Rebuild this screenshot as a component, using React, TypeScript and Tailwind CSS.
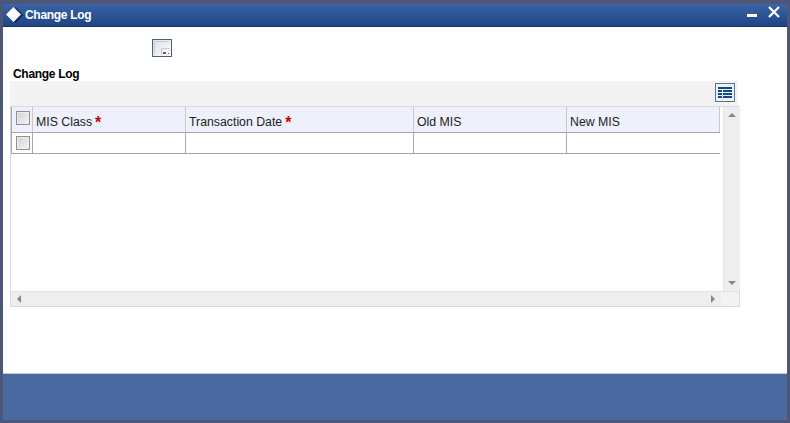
const Check = () => (
  <span className="block w-[14px] h-[14px] border border-[#8f8f8f] bg-gradient-to-br from-[#d0d0d0] to-[#f6f6f6] shadow-[inset_0_0_0_1px_#eeeeee]" />
);

const Req = () => <span className="text-[#cc0000] font-bold text-[16px] leading-[16px] ml-[3px]">*</span>;

const columns = [
  { label: "MIS Class", req: true, w: "w-[153px]" },
  { label: "Transaction Date", req: true, w: "w-[228px]" },
  { label: "Old MIS", req: false, w: "w-[153px]" },
  { label: "New MIS", req: false, w: "w-[153px]" },
];

export default function App() {
  return (
    <div className="w-[790px] h-[423px] bg-[#4d5676] pl-[3px] pr-[3px] pt-[4px] pb-[3px] flex flex-col font-['Liberation_Sans',Arial,sans-serif] overflow-hidden">
      <div className="h-[23px] shrink-0 flex items-center justify-between bg-gradient-to-b from-[#3a64a6] to-[#1f4586] border-b border-[#16305f]">
        <div className="flex items-center">
          <svg width="20" height="18" viewBox="0 0 20 18" className="ml-[2px]">
            <path d="M9 1.5 L17 9.5 L9 17.5 L1 9.5 Z" fill="#0d2a5c" transform="translate(1.5 -0.5)" />
            <path d="M8.5 1 L16 8.5 L8.5 16 L1 8.5 Z" fill="#ffffff" />
          </svg>
          <span className="text-white text-[12px] tracking-[-0.3px] font-bold">Change Log</span>
        </div>
        <div className="flex items-start h-full">
          <span className="block w-[10px] h-[3px] bg-white mt-[10px] mr-[11px]" />
          <svg width="12" height="12" viewBox="0 0 12 12" className="mt-[2px] mr-[7px]">
            <path d="M1 1 L11 11 M11 1 L1 11" stroke="#ffffff" strokeWidth="2.2" />
          </svg>
        </div>
      </div>

      <div className="flex-1 bg-white pl-[7px] flex flex-col">
        <div className="h-[16px] mt-[12px] ml-[142px]">
          <svg width="20" height="18" viewBox="0 0 20 18" className="block">
            <defs>
              <linearGradient id="g" x1="0" y1="0" x2="1" y2="1">
                <stop offset="0" stopColor="#dfe3e8" />
                <stop offset="1" stopColor="#fafbfc" />
              </linearGradient>
            </defs>
            <rect x="0.5" y="0.5" width="19" height="17" fill="url(#g)" stroke="#4f5f76" />
            <path d="M2.5 15.5 V2.5 H17.5" fill="none" stroke="#c3cbd3" />
            <path d="M9.5 15.5 V9.5 H17.5" fill="none" stroke="#c3cbd3" />
            <rect x="11" y="13" width="3" height="2" fill="#a5443c" />
            <rect x="16" y="14" width="1" height="1" fill="#a5443c" />
          </svg>
        </div>
        <div className="mt-[12px] ml-[3px] h-[14px] leading-[14px] text-[12px] tracking-[-0.3px] font-bold text-black">Change Log</div>
        <div className="w-[728px] h-[25px] bg-[#f3f3f3] flex items-start justify-end pr-[3px] pt-[2px]">
          <svg width="20" height="19" viewBox="0 0 20 19" className="block">
            <rect x="0.5" y="0.5" width="19" height="18" fill="#eef1f5" stroke="#5f7390" />
            <rect x="3" y="4" width="14" height="2" fill="#0f4a86" />
            <rect x="3" y="7" width="4" height="2" fill="#0f4a86" />
            <rect x="8" y="7" width="9" height="2" fill="#0f4a86" />
            <rect x="3" y="10" width="4" height="2" fill="#0f4a86" />
            <rect x="8" y="10" width="9" height="2" fill="#0f4a86" />
            <rect x="3" y="13" width="4" height="2" fill="#0f4a86" />
            <rect x="8" y="13" width="9" height="2" fill="#0f4a86" />
          </svg>
        </div>

        <div className="w-[730px] h-[201px] border border-[#d5dbe3] flex flex-col">
          <div className="flex-1 flex min-h-0">
            <div className="w-[709px] shrink-0">
              <div className="flex h-[26px] bg-[#eef1fb] border-b border-[#a6a6a6] border-l border-l-[#a6a6a6]">
                <div className="w-[21px] shrink-0 border-r border-[#c9c9c9] flex items-start pl-[4px] pt-[4px]"><Check /></div>
                {columns.map((c) => (
                  <div key={c.label} className={`${c.w} shrink-0 border-r border-[#c9c9c9] flex items-center pl-[3px] pt-[6px] text-[12.3px] text-[#222222]`}>
                    {c.label}
                    {c.req && <Req />}
                  </div>
                ))}
              </div>
              <div className="flex h-[21px] bg-white border-b border-[#a6a6a6] border-l border-l-[#a6a6a6]">
                <div className="w-[21px] shrink-0 border-r border-[#a6a6a6] flex items-start pl-[4px] pt-[3px]"><Check /></div>
                {columns.map((c) => (
                  <div key={c.label} className={`${c.w} shrink-0 border-r border-[#a6a6a6] last:border-r-0`} />
                ))}
              </div>
            </div>
            <div className="w-[17px] ml-[3px] shrink-0 bg-[#eeeeee] border-l border-[#e4e4e4] flex flex-col items-center justify-between py-[6px]">
              <span className="block w-0 h-0 border-l-[4px] border-r-[4px] border-b-[4px] border-l-transparent border-r-transparent border-b-[#888888]" />
              <span className="block w-0 h-0 border-l-[4px] border-r-[4px] border-t-[4px] border-l-transparent border-r-transparent border-t-[#888888]" />
            </div>
          </div>
          <div className="h-[15px] shrink-0 flex border-t border-[#e2e2e2]">
            <div className="w-[710px] shrink-0 bg-[#eeeeee] flex items-center justify-between px-[6px]">
              <span className="block w-0 h-0 border-t-[4px] border-b-[4px] border-r-[4px] border-t-transparent border-b-transparent border-r-[#888888]" />
              <span className="block w-0 h-0 border-t-[4px] border-b-[4px] border-l-[4px] border-t-transparent border-b-transparent border-l-[#888888]" />
            </div>
            <div className="flex-1 bg-[#f2f2f2]" />
          </div>
        </div>
      </div>

      <div className="h-[47px] shrink-0 bg-[#4a69a1] border-t border-[#b9cbdc]" />
    </div>
  );
}
